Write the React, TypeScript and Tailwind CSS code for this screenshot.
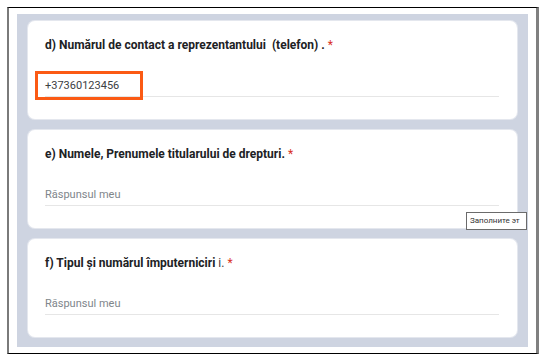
import React from "react";

const font = { fontFamily: "Roboto, 'Noto Sans', Arial, sans-serif" };

function Card({
  title,
  children,
}: {
  title: React.ReactNode;
  children: React.ReactNode;
}) {
  return (
    <div className="relative bg-white rounded-[7px] h-[98px] pl-[17px] pr-[18px] pt-[16px] shadow-[0_0_0_1px_#e4e7ee]">
      <div className="text-[12px] leading-[16px] font-bold text-[#202124] whitespace-pre">{title}</div>
      <div className="mt-[25px] border-b border-[#e6e6e6] pb-[2px] text-[11px] leading-[16px]">{children}</div>
    </div>
  );
}

export default function App() {
  return (
    <div className="relative w-[544px] h-[362px] bg-white pt-[7px] pl-[7px]" style={font}>
      <div className="w-[532px] h-[347px] border-t border-t-black border-b border-b-black border-l-2 border-l-[#7a7a7a] border-r-[3px] border-r-[#808080] pl-[8px] pt-[6px] pr-[8px] pb-[6px]">
        <div className="bg-[#ced4e1] h-full px-[11px] pt-[7px] pb-[8px] flex flex-col gap-[11px]">
          <Card
            title={
              <>
                d) Numărul de contact a reprezentantului  (telefon) . <span className="text-[#d93025] font-normal">*</span>
              </>
            }
          >
            <span className="text-[#3c4043]">+37360123456</span>
          </Card>
          <Card
            title={
              <>
                e) Numele, Prenumele titularului de drepturi. <span className="text-[#d93025] font-normal">*</span>
              </>
            }
          >
            <span className="text-[#80868b]">Răspunsul meu</span>
          </Card>
          <Card
            title={
              <>
                f) Tipul și numărul împuterniciri<span className="font-normal text-[#3c4043]"> i. </span>
                <span className="text-[#d93025] font-normal">*</span>
              </>
            }
          >
            <span className="text-[#80868b]">Răspunsul meu</span>
          </Card>
        </div>
      </div>
      {/* annotation box round the phone input */}
      <div className="absolute left-[35px] top-[71px] w-[108px] h-[29px] border-[3px] border-[#fb5a14]" />
      {/* browser tooltip */}
      <div className="absolute left-[466px] top-[212px] w-[61px] h-[18px] bg-white border border-[#6b6b6b] pl-[3px] text-[8px] leading-[16px] text-[#333] whitespace-nowrap">
        Заполните эт
      </div>
    </div>
  );
}
